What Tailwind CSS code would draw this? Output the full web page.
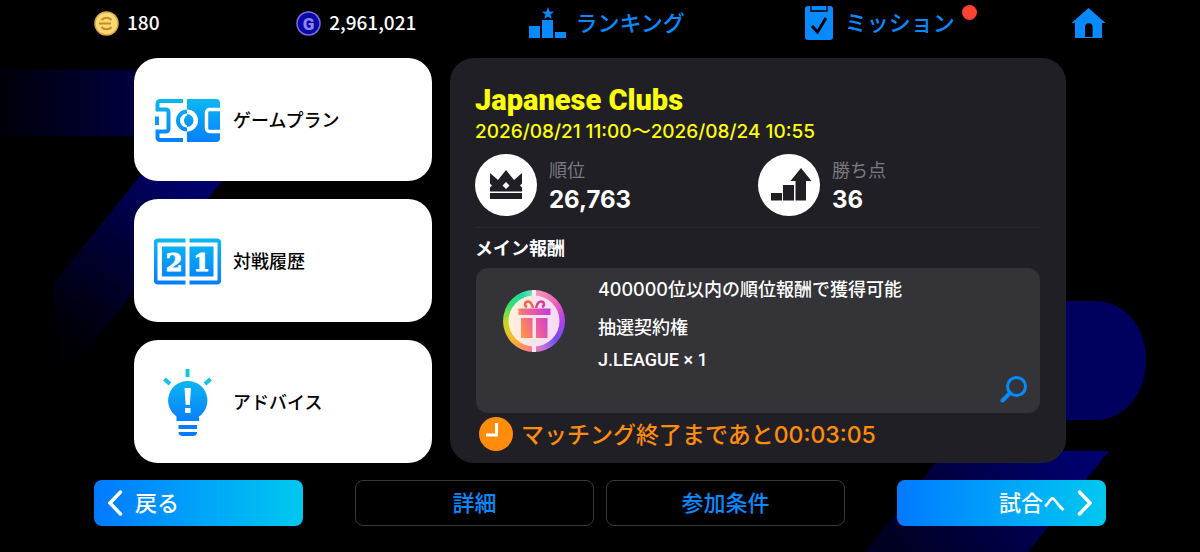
<!DOCTYPE html>
<html lang="ja">
  <head>
    <meta charset="UTF-8" />
    <meta name="viewport" content="width=device-width, initial-scale=1.0" />
    <title>Japanese Clubs</title>
    <script src="https://cdn.jsdelivr.net/npm/@tailwindcss/browser@4"></script>
  </head>
  <body
    class="relative isolate flex min-h-screen flex-col overflow-x-hidden bg-black font-['Noto_Sans_CJK_JP',sans-serif] font-medium text-white"
  >
    <!-- Background shapes -->
    <svg
      class="absolute inset-0 -z-10 h-full w-full"
      viewBox="0 0 1200 552"
      preserveAspectRatio="xMidYMid slice"
      aria-hidden="true"
    >
      <defs>
        <linearGradient id="bgBar" x1="0" x2="1" y1="0" y2="0">
          <stop offset="0" stop-color="#000008" />
          <stop offset="1" stop-color="#000048" />
        </linearGradient>
        <linearGradient id="bgLeft" gradientUnits="userSpaceOnUse" x1="190" y1="180" x2="60" y2="335">
          <stop offset="0" stop-color="#00006c" />
          <stop offset="0.5" stop-color="#000034" />
          <stop offset="1" stop-color="#000004" />
        </linearGradient>
        <linearGradient id="bgRight" gradientUnits="userSpaceOnUse" x1="1060" y1="450" x2="920" y2="580">
          <stop offset="0" stop-color="#00006c" />
          <stop offset="1" stop-color="#000020" />
        </linearGradient>
      </defs>
      <rect x="0" y="70" width="160" height="66" fill="url(#bgBar)" />
      <path d="M140 176H226L80 360H53V284Z" fill="url(#bgLeft)" />
      <path d="M1040 301H1095C1126 301 1146 328 1146 360S1126 420 1095 420H1040Z" fill="#00005e" />
      <path d="M945 451H1109L1028 552H865Z" fill="url(#bgRight)" />
    </svg>

    <!-- Topbar -->
    <header
      class="grid h-[46px] grid-cols-[202fr_233fr_275fr_266fr_35fr] items-center px-[94px] text-[19px]"
    >
      <div class="flex items-center gap-2">
        <svg width="25" height="25" viewBox="0 0 25 25" fill="none">
          <circle cx="12.5" cy="12.5" r="11.5" fill="#f8d878" stroke="#e2a93c" stroke-width="1.5" />
          <path d="M7.5 9C10 6 15 6 17.5 9M5 12.5H17M7.5 16C10 19 15 19 17.5 16" stroke="#c98a1c" stroke-width="2" />
        </svg>
        <span class="pb-0.5">180</span>
      </div>
      <div class="flex items-center gap-2">
        <svg width="25" height="25" viewBox="0 0 25 25">
          <circle cx="12.5" cy="12.5" r="11.5" fill="#0a0aa0" stroke="#7a6cf0" stroke-width="1.5" />
          <text x="12.5" y="18.5" text-anchor="middle" font-family="Roboto, sans-serif" font-weight="900" font-size="17" fill="#8f86ff">G</text>
        </svg>
        <span class="pb-0.5">2,961,021</span>
      </div>
      <button class="flex items-center gap-2 text-[22px] text-[#078aff]">
        <svg width="38" height="32" viewBox="0 0 38 32" fill="currentColor">
          <path d="M19 0L20.600 4.600L25 4.700L21.500 7.500L22.700 12L19 9.400L15.300 12L16.500 7.500L13 4.700L17.400 4.600Z" />
          <path d="M0 19H11V31H0ZM13 13H24V31H13ZM26 25H37V31H26Z" />
        </svg>
        <span class="pb-1">ランキング</span>
      </button>
      <button
        class="relative flex items-center gap-3 justify-self-start pr-[22px] text-[22px] text-[#078aff]"
      >
        <svg width="28" height="34" viewBox="0 0 28 34">
          <rect width="28" height="34" rx="3" fill="currentColor" />
          <path d="M6 0V5H22V0" fill="none" stroke="#000" stroke-width="1.5" />
          <path d="M7 20L12.5 26L21 12" fill="none" stroke="#000" stroke-width="3" />
        </svg>
        <span class="pb-1">ミッション</span>
        <span class="absolute top-0 right-0 size-[15px] rounded-full bg-[#ff4136]"></span>
      </button>
      <button class="text-[#078aff]" aria-label="ホーム">
        <svg width="35" height="32" viewBox="0 0 35 32">
          <path d="M17.500 1L34.500 16H31V31H4V16H0.500Z" fill="currentColor" />
          <path d="M14 30V20A3.800 3.800 0 0 1 21.600 20V30Z" fill="#000" />
        </svg>
      </button>
    </header>

    <main
      class="mt-3 grid flex-1 grid-cols-[298fr_616fr] gap-[18px] px-[134px]"
    >
      <!-- Menu cards -->
      <nav class="grid grid-rows-3 gap-[18px] text-lg text-black">
        <button class="flex items-center gap-3 rounded-[24px] bg-white pl-5">
          <svg width="67" height="66" viewBox="0 0 67 66" fill="none">
            <defs>
              <linearGradient id="blue" gradientUnits="userSpaceOnUse" x1="0" y1="6" x2="0" y2="58">
                <stop offset="0" stop-color="#0cc0ee" />
                <stop offset="1" stop-color="#067bff" />
              </linearGradient>
            </defs>
            <path d="M29 14H6A2.500 2.500 0 0 0 3.500 16.500V22.500H12A2.500 2.500 0 0 1 14.500 25V42A2.500 2.500 0 0 1 12 44.500H3.500V50.500A2.500 2.500 0 0 0 6 53H29" stroke="url(#blue)" stroke-width="4" />
            <path d="M1 29.500H5V38H1Z" fill="url(#blue)" />
            <path d="M33 12H62A4 4 0 0 1 66 16V51A4 4 0 0 1 62 55H33Z" fill="url(#blue)" />
            <path d="M67 22.500H55.500A3 3 0 0 0 52.500 25.500V41.500A3 3 0 0 0 55.500 44.500H67" stroke="#fff" stroke-width="3.500" />
            <path d="M33 22.500A11 11 0 0 1 33 44.500Z" fill="#fff" />
            <path d="M33 27A6.500 6.500 0 0 1 33 40Z" fill="url(#blue)" />
            <path d="M33 24.500A9 9 0 0 0 33 42.500" stroke="url(#blue)" stroke-width="4" />
            <path d="M33 28.500V38.500C29 37 29 30 33 28.500Z" fill="url(#blue)" />
          </svg>
          <span class="pb-0.5">ゲームプラン</span>
        </button>
        <button class="flex items-center gap-3 rounded-[24px] bg-white pl-5">
          <svg width="67" height="66" viewBox="0 0 67 66" fill="none">
            <path d="M31.500 12.500H4A2.500 2.500 0 0 0 1.500 15V52A2.500 2.500 0 0 0 4 54.500H31.500M35.500 12.500H63A2.500 2.500 0 0 1 65.500 15V52A2.500 2.500 0 0 1 63 54.500H35.500" stroke="url(#blue)" stroke-width="4" />
            <path d="M8 18.500H31.500V48.500H8ZM35.500 18.500H59.500V48.500H35.500Z" fill="url(#blue)" />
            <g font-family="DejaVu Serif, serif" font-weight="700" font-size="24" fill="#fff" stroke="#fff" text-anchor="middle">
              <text x="20" y="43">2</text>
              <text x="47.500" y="43">1</text>
            </g>
          </svg>
          <span class="pb-0.5">対戦履歴</span>
        </button>
        <button class="flex items-center gap-3 rounded-[24px] bg-white pl-5">
          <svg width="67" height="70" viewBox="0 0 67 70" fill="none">
            <path d="M33.500 2V10M10.500 12L16 17M56.500 12L51 17" stroke="#14c3e6" stroke-width="4" />
            <path d="M33.500 14A19.500 19.500 0 0 1 45 49.500V54H22.500V49.500A19.500 19.500 0 0 1 33.500 14Z" fill="url(#blue)" />
            <path d="M30.500 21H37L35.800 38H31.700ZM31 41H36.500V46H31Z" fill="#fff" />
            <path d="M24.500 58H43V62H24.500ZM24.500 65H43Q43 69 39 69H28.500Q24.500 69 24.500 65Z" fill="#087bff" />
          </svg>
          <span class="pb-0.5">アドバイス</span>
        </button>
      </nav>

      <!-- Event panel -->
      <section class="rounded-[24px] bg-[#201f25] px-[25px] pt-6 pb-2">
        <h1
          class="font-[Roboto,sans-serif] text-[29px] leading-9 font-black text-[#ffff0a]"
        >
          Japanese Clubs
        </h1>
        <p
          class="font-[Inter,'Noto_Sans_CJK_JP',sans-serif] text-[19px] leading-7 whitespace-nowrap text-[#ffff0a]"
        >
          2026/08/21 11:00～2026/08/24 10:55
        </p>

        <dl class="mt-2 grid grid-cols-2">
          <div class="flex items-center gap-3">
            <svg width="62" height="62" viewBox="0 0 62 62">
              <circle cx="31" cy="31" r="31" fill="#fff" />
              <path d="M15 19L23 26L31 16L39 26L47 19V37.500H15ZM15 39H47V45H15Z" fill="#201f25" />
              <path d="M31 28L34.500 31.500L31 35L27.500 31.500ZM15 29.500L17 31.500L15 33.500ZM47 29.500L45 31.500L47 33.500Z" fill="#fff" />
            </svg>
            <div>
              <dt class="text-lg leading-[30px] font-normal text-[#7b7a80]">順位</dt>
              <dd class="font-[Inter,sans-serif] text-2xl leading-8 font-bold">26,763</dd>
            </div>
          </div>
          <div class="flex items-center gap-3">
            <svg width="62" height="62" viewBox="0 0 62 62">
              <circle cx="31" cy="31" r="31" fill="#fff" />
              <path d="M13 39H24V46.500H13ZM25 31H36V46.500H25ZM37.500 46.500V27H32.500L43 14L53.500 27H48V46.500Z" fill="#201f25" />
            </svg>
            <div>
              <dt class="text-lg leading-[30px] font-normal text-[#7b7a80]">勝ち点</dt>
              <dd class="font-[Inter,sans-serif] text-2xl leading-8 font-bold">36</dd>
            </div>
          </div>
        </dl>

        <h2
          class="mt-[11px] border-t border-[#2b2a30] pb-0.5 text-lg leading-[38px] font-bold"
        >
          メイン報酬
        </h2>
        <div
          class="mx-px flex min-h-[145px] items-start rounded-xl bg-[#343338] pr-3 pl-[27px]"
        >
          <div
            class="mt-[22px] flex size-[62px] shrink-0 items-center justify-center rounded-full bg-[conic-gradient(#f0a0b8,#f060b8_50deg,#b040f0_90deg,#7050f0_130deg,#c070e0_160deg,#ff8080_190deg,#ffb030_225deg,#c8d820_265deg,#30e070_305deg,#20dca0_335deg,#80e0c0)]"
          >
            <svg width="62" height="62" viewBox="0 0 62 62" fill="none">
              <defs>
                <linearGradient id="gift" gradientUnits="userSpaceOnUse" x1="15" x2="47" y1="40" y2="26">
                  <stop offset="0" stop-color="#ff9a3c" />
                  <stop offset="0.500" stop-color="#f0609a" />
                  <stop offset="1" stop-color="#c83cd8" />
                </linearGradient>
                <linearGradient id="disc" x1="0" x2="1" y1="0" y2="0">
                  <stop offset="0" stop-color="#fff0da" />
                  <stop offset="1" stop-color="#f6daf6" />
                </linearGradient>
              </defs>
              <path d="M31 0V62" stroke="#fbe8f4" stroke-width="4" />
              <circle cx="31" cy="31" r="25.500" fill="url(#disc)" />
              <path d="M15.500 18.500H47.500V25H15.500ZM18 28H29.500V48H18ZM33 28H44.500V48H33Z" fill="url(#gift)" />
              <g stroke-width="2.500">
                <path d="M30 18C29 14 27.500 11.500 25 11.500C21.500 11.500 21 16 24 17" stroke="#f2683e" />
                <path d="M33 18C34 14 35.500 11.500 38 11.500C41.500 11.500 42 16 39 17" stroke="#d83c96" />
              </g>
            </svg>
          </div>
          <div class="ml-[33px] flex-1 pt-[7px] text-lg leading-[30px]">
            <p class="font-[Inter,'Noto_Sans_CJK_JP',sans-serif]">
              400000位以内の順位報酬で獲得可能
            </p>
            <p class="mt-1.5">抽選契約権</p>
            <p class="mt-1 font-[Roboto,sans-serif]">J.LEAGUE × 1</p>
          </div>
          <button class="mb-[10px] self-end text-[#078aff]" aria-label="詳細を見る">
            <svg width="28" height="28" viewBox="0 0 28 28" fill="none" stroke="currentColor" stroke-width="3">
              <circle cx="16.500" cy="11.500" r="9" />
              <path d="M10 18L2.500 25.500" stroke-width="4" stroke-linecap="round" />
            </svg>
          </button>
        </div>

        <p
          class="flex h-[42px] items-center gap-2 pl-1 font-[Inter,'Noto_Sans_CJK_JP',sans-serif] text-[23px] leading-none whitespace-nowrap text-[#ff8c0a]"
        >
          <svg width="34" height="34" viewBox="0 0 34 34" fill="none">
            <circle cx="17" cy="17" r="17" fill="currentColor" />
            <path d="M17.500 6V18H7" stroke="#fff" stroke-width="3" />
          </svg>
          <span class="pt-0.5">マッチング終了まであと00:03:05</span>
        </p>
      </section>
    </main>

    <!-- Bottom buttons -->
    <footer
      class="mt-[17px] mb-[26px] flex justify-between px-[94px] text-[22px]"
    >
      <button
        class="flex h-[46px] w-[209px] items-center gap-3 rounded-lg bg-linear-to-r from-[#0579ff] to-[#04c8ef] pl-[14px]"
      >
        <svg width="15" height="26" viewBox="0 0 15 26" fill="none" stroke="#fff" stroke-width="3.5" stroke-linecap="round">
          <path d="M12.500 2L2 13L12.500 24" />
        </svg>
        <span class="pb-1">戻る</span>
      </button>
      <div class="flex gap-3 text-[#078aff]">
        <button class="h-[46px] w-[239px] rounded-lg border border-[#38383c] bg-black pb-1">詳細</button>
        <button class="h-[46px] w-[239px] rounded-lg border border-[#38383c] bg-black pb-1">参加条件</button>
      </div>
      <button
        class="flex h-[46px] w-[209px] items-center justify-end gap-3 rounded-lg bg-linear-to-r from-[#0579ff] to-[#04c8ef] pr-[14px]"
      >
        <span class="pb-1">試合へ</span>
        <svg width="15" height="26" viewBox="0 0 15 26" fill="none" stroke="#fff" stroke-width="3.5" stroke-linecap="round">
          <path d="M2.500 2L13 13L2.500 24" />
        </svg>
      </button>
    </footer>
  </body>
</html>
